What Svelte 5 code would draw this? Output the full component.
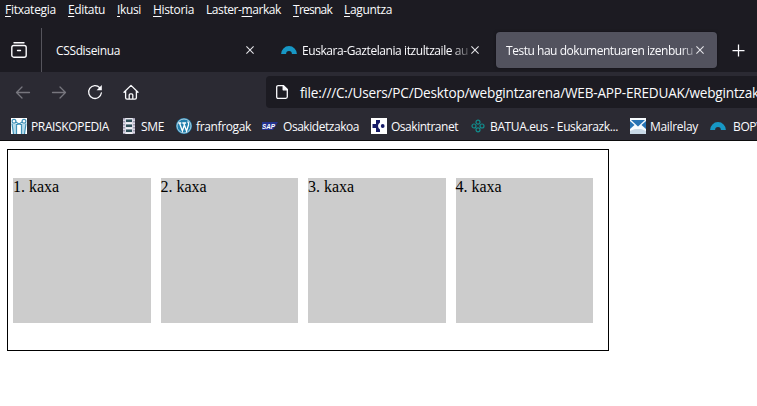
<script>
  const menu = [
    ['', 'F', 'itxategia', 51], ['', 'E', 'ditatu', 37], ['', 'I', 'kusi', 24],
    ['', 'H', 'istoria', 41], ['Laster-', 'm', 'arkak', 75], ['', 'T', 'resnak', 39], ['', 'L', 'aguntza', 48]
  ];
  const bookmarks = [
    ['praisko', 'PRAISKOPEDIA', 78], ['film', 'SME', 23], ['wp', 'franfrogak', 55],
    ['sap', 'Osakidetzakoa', 76], ['osaki', 'Osakintranet', 67],
    ['batua', 'BATUA.eus - Euskarazk...', 128], ['mail', 'Mailrelay', 48], ['arc', 'BOPV', 30]
  ];
  const boxes = ['1. kaxa', '2. kaxa', '3. kaxa', '4. kaxa'];

  // Spread the letters so that a label takes exactly its column width.
  function fit(node, width) {
    const n = node.textContent.length;
    const natural = node.getBoundingClientRect().width;
    node.style.letterSpacing = `${(width - natural) / n}px`;
  }
</script>

{#snippet arc()}
  <svg width="16" height="16" viewBox="0 0 16 16"><path d="M2.6 12.4a5.4 5.4 0 0 1 10.8 0" transform="translate(0 -.4)" fill="none" stroke="#1797c5" stroke-width="5"/></svg>
{/snippet}

{#snippet cross()}
  <svg class="cross" width="8" height="8" viewBox="0 0 8 8"><path d="M.4.4l7.2 7.2M7.6.4L.4 7.6" stroke="#e6e6ea" stroke-width="1.05"/></svg>
{/snippet}

<div class="browser">
  <nav class="menu">
    {#each menu as [before, key, after, w]}
      <span use:fit={w}>{before}<u>{key}</u>{after}</span>
    {/each}
  </nav>

  <div class="tabs">
    <div class="view">
      <svg width="16" height="16" viewBox="0 0 16 16" fill="none" stroke="#fbfbfe" stroke-width="1.4" stroke-linecap="round"><path d="M3 .8h10"/><rect x=".8" y="3.5" width="14.4" height="11.7" rx="2"/><path d="M6.500 8.500h3"/></svg>
    </div>
    <div class="tab first"><div class="title"><span use:fit={64}>CSSdiseinua</span></div>{@render cross()}</div>
    <div class="tab second">{@render arc()}<div class="title fade"><span use:fit={166}>Euskara-Gaztelania itzultzaile au</span></div>{@render cross()}</div>
    <div class="tab active"><div class="title fade short"><span use:fit={187}>Testu hau dokumentuaren izenburu</span></div>{@render cross()}</div>
    <svg class="plus" width="13" height="13" viewBox="0 0 13 13"><path d="M6.500.5v12M.5 6.500h12" stroke="#fbfbfe" stroke-width="1.25"/></svg>
  </div>

  <div class="toolbar">
    <svg class="dim" width="16" height="16" viewBox="0 0 16 16"><path d="M14.500 8.500H1.500M7 3L1.500 8.500 7 14"/></svg>
    <svg class="dim" width="16" height="16" viewBox="0 0 16 16"><path d="M1.500 8.500h13M9 3l5.500 5.500L9 14"/></svg>
    <svg width="16" height="16" viewBox="0 0 16 16"><path d="M12.800 3.800A6.400 6.400 0 1 0 14.400 8.800"/><path d="M14.800 1v5.200H9.600z" fill="#fbfbfe" stroke="none"/></svg>
    <svg width="16" height="16" viewBox="0 0 16 16"><path d="M1 8.200L8 1.400 15 8.200M2.600 7v6.800q0 1.400 1.400 1.400h8q1.400 0 1.400-1.400V7M6.200 15v-4q0-1.200 1.200-1.200h1.200q1.200 0 1.200 1.200v4"/></svg>
    <div class="url">
      <svg width="12" height="14" viewBox="0 0 12 14"><path d="M2.200.7h5.300l3.800 3.800v7.300q0 1.500-1.500 1.500H2.200q-1.500 0-1.500-1.500V2.200Q.7.7 2.200.7z"/><path d="M7.200.7v4.100h4.100z" fill="#fbfbfe"/></svg>
      <span use:fit={459}>file:///C:/Users/PC/Desktop/webgintzarena/WEB-APP-EREDUAK/webgintzak</span>
    </div>
  </div>

  <div class="bookmarks">
    {#each bookmarks as [icon, label, w]}
      <div class="bookmark {icon}">
        {#if icon === 'arc'}
          {@render arc()}
        {:else}
          <svg width="16" height="16" viewBox="0 0 16 16">
            {#if icon === 'praisko'}
              <rect width="16" height="16" fill="#fff"/>
              <path d="M1 6h4.500v10H2.500zM10.500 6H15l-1.500 10h-3z" fill="#b9dceb"/>
              <g fill="none" stroke="#3f91b8" stroke-width="1.200"><circle cx="3" cy="3.300" r="1.900"/><circle cx="13" cy="3.300" r="1.900"/><path d="M4.800 4L8 6l3.200-2M5 7l3-1 3 1M1 5.500L2.500 16M5.500 6v10M10.500 6v10M15 5.500L13.500 16"/></g>
            {:else if icon === 'film'}
              <rect x="2" width="12" height="16" fill="#d9d8e4"/><path d="M3 0v16M13 0v16" stroke="#77718c" stroke-width="1.200" stroke-dasharray="1.500 1.500"/><path d="M5 1.500h6v2.500H5zM5 6.500h6V9H5zM5 11.500h6V14H5z" fill="#2f4f58"/><path d="M5 0h6M5 5.200h6M5 10.200h6M5 15.200h6" stroke="#fff"/>
            {:else if icon === 'wp'}
              <circle cx="8" cy="8" r="8" fill="#227fac"/><circle cx="8" cy="8" r="7" fill="none" stroke="#e9f4fa" stroke-width=".7"/><path d="M2.300 5h3M6.300 5h3.800M3.500 5l2.900 8L8.500 6.500M7.700 5l2.800 8 2-6q.6-2-.9-3.500" fill="none" stroke="#fff" stroke-width="1.300"/>
            {:else if icon === 'sap'}
              <path d="M0 4h16l-5 8H0z" fill="#23318e"/><text x="0" y="10.500" font-size="7.500" font-weight="bold" font-style="italic" font-family="Liberation Sans, sans-serif" fill="#fff" textLength="13" lengthAdjust="spacingAndGlyphs">SAP</text>
            {:else if icon === 'osaki'}
              <rect width="16" height="16" fill="#fff"/><path d="M5 2h4v2.500Q7 5.500 7 8t2 3.500V14H5v-4H1.500V6H5z" fill="#171b67"/><circle cx="11.700" cy="8" r="1.900" fill="#171b67"/>
            {:else if icon === 'batua'}
              <g fill="none" stroke="#128d8d" stroke-width="1.200"><circle cx="8" cy="4.200" r="2"/><circle cx="8" cy="11.800" r="2"/><circle cx="4" cy="8" r="2"/><circle cx="12" cy="8" r="2"/></g>
            {:else if icon === 'mail'}
              <rect width="16" height="16" fill="#f7fbfe"/><path d="M1 2h14L8 8.500z" fill="#2673b4"/><path d="M0 3v8l4.500-4zM16 3v8l-4.500-4z" fill="#2673b4"/><path d="M0 13l5-2h6l5 2v3H0z" fill="#c9d9e7"/>
            {/if}
          </svg>
        {/if}
        <span use:fit={w}>{label}</span>
      </div>
    {/each}
  </div>

  <main>
    <div class="container">
      {#each boxes as box}<div class="box">{box}</div>{/each}
    </div>
  </main>
</div>

<style>
  .browser { box-sizing: border-box; width: 757px; height: 406px; overflow: hidden; background: #fff; color: #fbfbfe; font: 12px/16px "Open Sans", "Noto Sans", sans-serif; white-space: nowrap; }
  .browser * { box-sizing: border-box; }
  svg { display: block; flex: none; }
  span { display: inline-block; flex: none; }
  .menu { height: 28px; padding: 2px 0 0 5px; background: #1c1b22; display: flex; gap: 12px; }
  u { text-decoration: underline; text-underline-offset: 2px; text-decoration-thickness: 1px; text-decoration-skip-ink: none; }
  .tabs { height: 44px; background: #1c1b22; display: flex; align-items: center; }
  .view { width: 42px; height: 44px; padding: 14px 0 0 11px; border-right: 1px solid #55545c; }
  .tab { height: 36px; display: flex; align-items: center; border-radius: 4px; }
  .first { width: 224px; padding-left: 14px; }
  .second { width: 225px; padding-left: 15px; gap: 5px; }
  .active { width: 221px; margin-left: 5px; padding-left: 10px; background: #52525e; box-shadow: 0 0 3px #111016; }
  .title { overflow: hidden; height: 18px; padding-top: 2px; }
  .first .title { width: 190px; }
  .second .title { width: 167px; }
  .second .cross { margin-left: -3px; }
  .active .title { width: 187px; }
  .active .cross { margin-left: 3px; }
  .fade { mask-image: linear-gradient(to left, rgb(0 0 0 / .2), #000 18px); }
  .short { mask-image: linear-gradient(to left, rgb(0 0 0 / .35), #000 12px); }
  .plus { margin-left: 15px; }
  .toolbar { height: 40px; background: #2b2a33; display: flex; align-items: center; gap: 20px; padding-left: 15px; }
  .toolbar svg { fill: none; stroke: #fbfbfe; stroke-width: 1.3; stroke-linecap: round; stroke-linejoin: round; }
  .toolbar .dim { stroke: #77767e; }
  .url { flex: 1; min-width: 0; height: 32px; margin-left: 107px; padding-left: 10px; display: flex; align-items: center; gap: 12px; overflow: hidden; border-radius: 4px 0 0 4px; background: #1c1b22; font-size: 13.6px; line-height: 20px; }
  .url span { padding-top: 2px; }
  .bookmarks { height: 29px; padding: 0 0 1px 11px; display: flex; align-items: center; gap: 12px; background: #2b2a33; border-bottom: 1px solid #0c0c0d; }
  .bookmark { display: flex; align-items: center; gap: 4px; }
  .bookmark span { height: 18px; padding-top: 2px; }
  .sap { gap: 5px; margin-left: -1px; }
  .arc { gap: 7px; }
  main { padding: 8px 0 0 7px; color: #000; font: 16px/18px "Liberation Serif", "Times New Roman", serif; }
  .container { width: 602px; height: 202px; border: 1px solid #000; padding: 28px 0 0 5px; display: flex; gap: 10px; }
  .box { width: 137.5px; height: 145px; background: #ccc; }
</style>
